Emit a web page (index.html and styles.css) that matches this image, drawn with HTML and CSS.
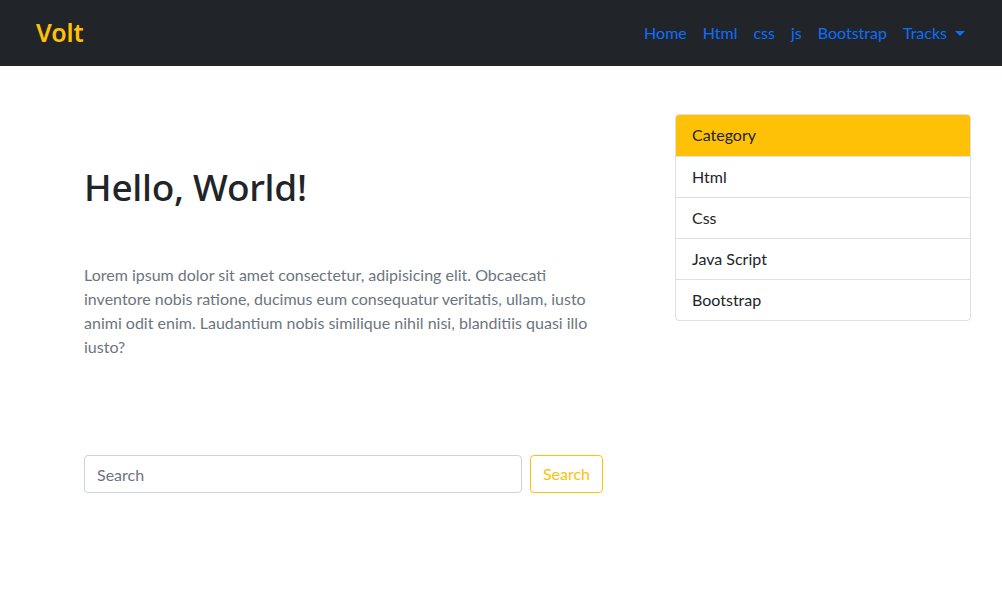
FILE: index.html
```html
<!DOCTYPE html>
<html lang="en">
<head>
<meta charset="utf-8">
<title>Volt</title>
<link rel="stylesheet" href="styles.css">
</head>
<body>
<nav class="navbar">
  <a class="brand" href="#">Volt</a>
  <ul class="nav">
    <li><a href="#">Home</a></li>
    <li><a href="#">Html</a></li>
    <li><a href="#">css</a></li>
    <li><a href="#">js</a></li>
    <li><a href="#">Bootstrap</a></li>
    <li><a href="#" class="dropdown">Tracks</a></li>
  </ul>
</nav>
<main class="main">
  <section class="content">
    <h1 class="title">Hello, World!</h1>
    <p class="lead">Lorem ipsum dolor sit amet consectetur, adipisicing elit. Obcaecati inventore nobis ratione, ducimus eum consequatur veritatis, ullam, iusto animi odit enim. Laudantium nobis similique nihil nisi, blanditiis quasi illo iusto?</p>
    <form class="search">
      <input class="search-input" type="search" placeholder="Search">
      <button class="search-btn" type="button">Search</button>
    </form>
  </section>
  <aside class="sidebar">
    <ul class="list">
      <li class="list-item active">Category</li>
      <li class="list-item">Html</li>
      <li class="list-item">Css</li>
      <li class="list-item">Java Script</li>
      <li class="list-item">Bootstrap</li>
    </ul>
  </aside>
</main>
</body>
</html>
```
FILE: styles.css
```css
* { box-sizing: border-box; }
body {
  margin: 0;
  font-family: Lato, "Noto Sans", sans-serif;
  font-size: 16px;
  line-height: 1.5;
  color: #212529;
  background: #fff;
}
.navbar {
  height: 66px;
  background: #212529;
  display: flex;
  align-items: center;
  justify-content: space-between;
  padding: 0 29px 0 36px;
}
.brand {
  color: #ffc107;
  font-family: "Noto Sans", sans-serif;
  font-size: 25px;
  font-weight: 600;
  text-decoration: none;
  letter-spacing: -0.1px;
}
.nav {
  list-style: none;
  margin: 0;
  padding: 0;
  display: flex;
}
.nav a {
  display: block;
  padding: 8px 8px;
  color: #0d6efd;
  text-decoration: none;
}
.dropdown::after {
  content: "";
  display: inline-block;
  margin-left: 8px;
  vertical-align: 3px;
  border-top: 5px solid #0d6efd;
  border-left: 5px solid transparent;
  border-right: 5px solid transparent;
}
.main {
  display: flex;
  padding: 48px 31px 0 84px;
  gap: 72px;
}
.content {
  width: 519px;
  flex: none;
}
.title {
  margin: 51px 0 54px;
  font-family: "Noto Sans", sans-serif;
  font-size: 37px;
  font-weight: 500;
  line-height: 1.2;
  letter-spacing: -0.3px;
}
.lead {
  margin: 0;
  color: #6c757d;
  line-height: 24px;
}
.search {
  margin-top: 96px;
  display: flex;
  gap: 8px;
}
.search-input {
  flex: 1;
  height: 38px;
  border: 1px solid #ced4da;
  border-radius: 4px;
  padding: 6px 12px;
  font: inherit;
  color: #212529;
}
.search-input::placeholder { color: #6c757d; }
.search-btn {
  height: 38px;
  border: 1px solid #ffc107;
  border-radius: 4px;
  background: #fff;
  color: #ffc107;
  font: inherit;
  padding: 6px 12px;
}
.sidebar { flex: 1; }
.list {
  list-style: none;
  margin: 0;
  padding: 0;
  border: 1px solid rgba(0,0,0,.125);
  border-radius: 4px;
  overflow: hidden;
}
.list-item {
  padding: 8px 16px;
  height: 41px;
  border-top: 1px solid rgba(0,0,0,.125);
}
.list-item:first-child { border-top: 0; }
.list-item.active {
  background: #ffc107;
}
```
